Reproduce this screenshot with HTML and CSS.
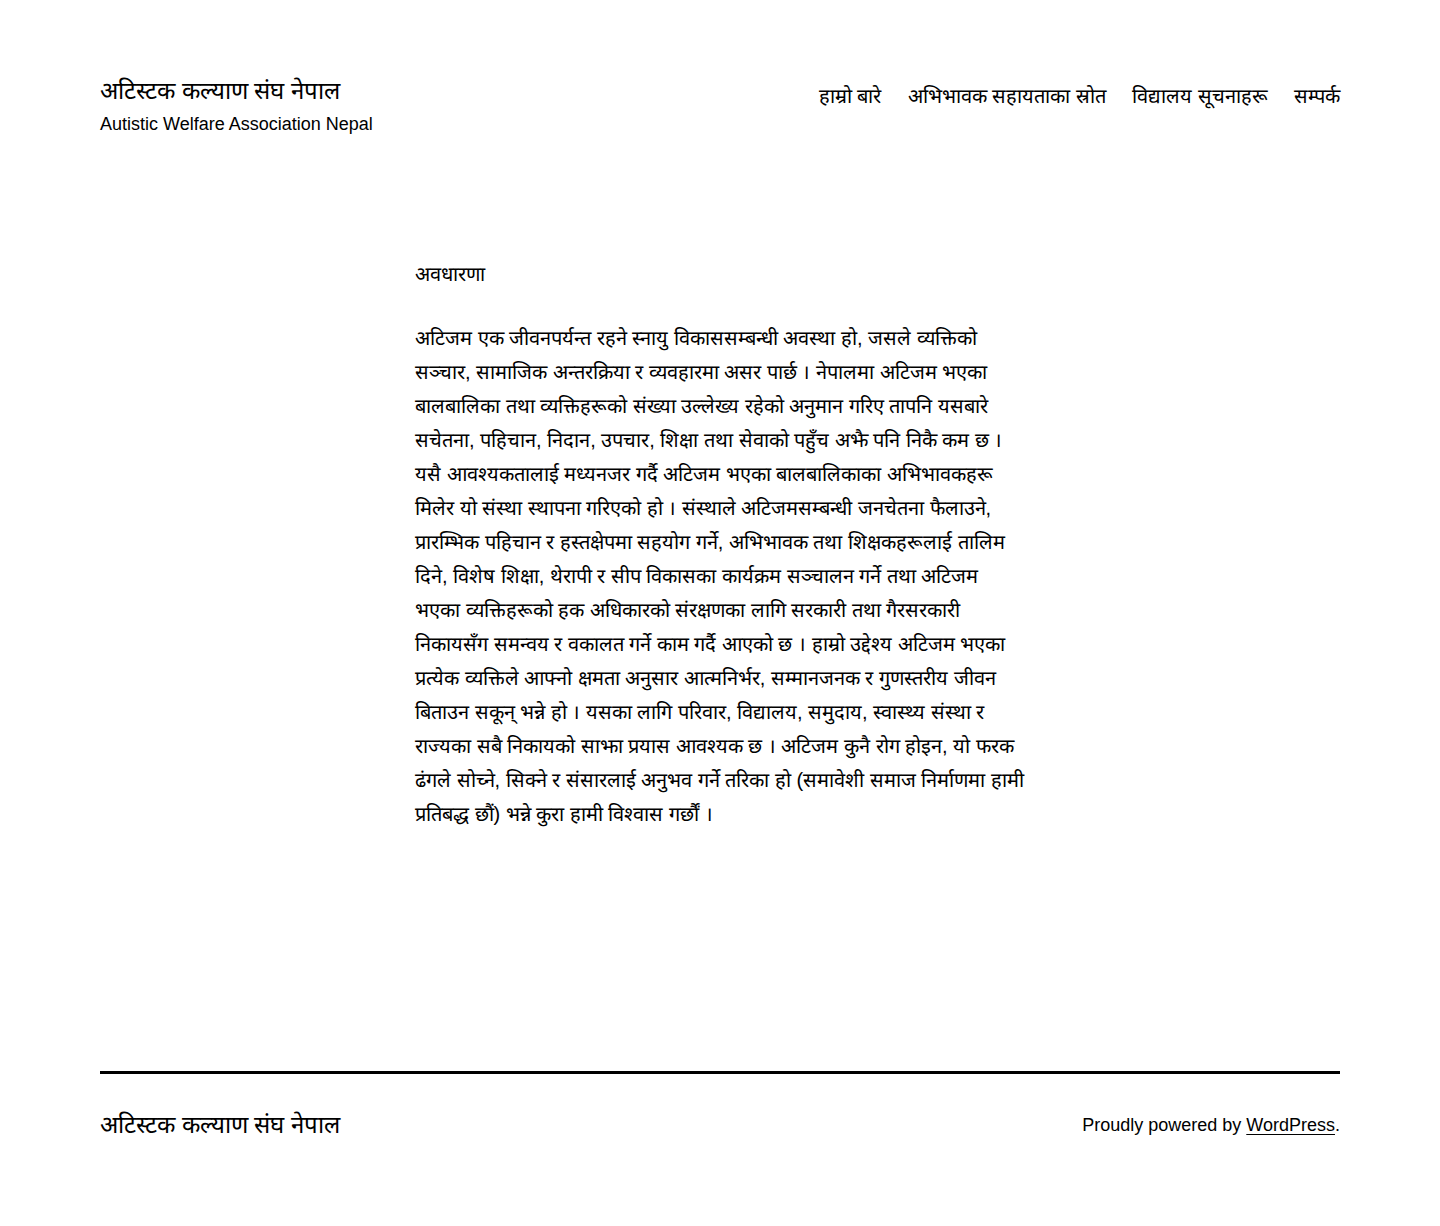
FILE: index.html
```html
<!DOCTYPE html>
<html lang="ne">
<head>
<meta charset="utf-8">
<title>अटिस्टक कल्याण संघ नेपाल</title>
<link rel="stylesheet" href="styles.css">
</head>
<body>
<header class="site-header">
  <div class="branding">
    <p class="site-title"><a href="#">अटिस्टक कल्याण संघ नेपाल</a></p>
    <p class="site-description">Autistic Welfare Association Nepal</p>
  </div>
  <nav class="primary-nav">
    <ul class="menu">
      <li><a href="#">हाम्रो बारे</a></li>
      <li><a href="#">अभिभावक सहायताका स्रोत</a></li>
      <li><a href="#">विद्यालय सूचनाहरू</a></li>
      <li><a href="#">सम्पर्क</a></li>
    </ul>
  </nav>
</header>
<main class="site-main">
  <div class="entry">
    <p class="lead">अवधारणा</p>
    <p class="body-text">अटिजम एक जीवनपर्यन्त रहने स्नायु विकाससम्बन्धी अवस्था हो, जसले व्यक्तिको सञ्चार, सामाजिक अन्तरक्रिया र व्यवहारमा असर पार्छ । नेपालमा अटिजम भएका बालबालिका तथा व्यक्तिहरूको संख्या उल्लेख्य रहेको अनुमान गरिए तापनि यसबारे सचेतना, पहिचान, निदान, उपचार, शिक्षा तथा सेवाको पहुँच अझै पनि निकै कम छ । यसै आवश्यकतालाई मध्यनजर गर्दै अटिजम भएका बालबालिकाका अभिभावकहरू मिलेर यो संस्था स्थापना गरिएको हो । संस्थाले अटिजमसम्बन्धी जनचेतना फैलाउने, प्रारम्भिक पहिचान र हस्तक्षेपमा सहयोग गर्ने, अभिभावक तथा शिक्षकहरूलाई तालिम दिने, विशेष शिक्षा, थेरापी र सीप विकासका कार्यक्रम सञ्चालन गर्ने तथा अटिजम भएका व्यक्तिहरूको हक अधिकारको संरक्षणका लागि सरकारी तथा गैरसरकारी निकायसँग समन्वय र वकालत गर्ने काम गर्दै आएको छ । हाम्रो उद्देश्य अटिजम भएका प्रत्येक व्यक्तिले आफ्नो क्षमता अनुसार आत्मनिर्भर, सम्मानजनक र गुणस्तरीय जीवन बिताउन सकून् भन्ने हो । यसका लागि परिवार, विद्यालय, समुदाय, स्वास्थ्य संस्था र राज्यका सबै निकायको साझा प्रयास आवश्यक छ । अटिजम कुनै रोग होइन, यो फरक ढंगले सोच्ने, सिक्ने र संसारलाई अनुभव गर्ने तरिका हो (समावेशी समाज निर्माणमा हामी प्रतिबद्ध छौं) भन्ने कुरा हामी विश्वास गर्छौं ।</p>
  </div>
</main>
<footer class="site-footer">
  <div class="site-info">
    <div class="site-name"><a href="#">अटिस्टक कल्याण संघ नेपाल</a></div>
    <div class="powered-by">Proudly powered by <a href="#">WordPress</a>.</div>
  </div>
</footer>
</body>
</html>
```
FILE: styles.css
```css
html, body {
  margin: 0;
  padding: 0;
  background: #ffffff;
}

body {
  font-family: "Liberation Sans", Arial, sans-serif;
  color: #000000;
  font-size: 20px;
  line-height: 1.7;
}

a {
  color: #000000;
}

.site-header {
  max-width: 1240px;
  margin: 0 auto;
  padding: 75px 0 60px;
  display: flex;
  justify-content: space-between;
  align-items: flex-start;
}

.site-title {
  margin: 0;
  font-size: 24px;
  line-height: 1.3;
}

.site-title a {
  text-decoration: none;
}

.site-description {
  margin: 5.5px 0 0;
  font-size: 18px;
  line-height: 1.4;
}

.primary-nav {
  margin-top: 8px;
}

.menu {
  list-style: none;
  margin: 0;
  padding: 0;
  display: flex;
  gap: 26.4px;
  font-size: 20px;
  line-height: 1.3;
}

.menu a {
  text-decoration: none;
}

.site-main {
  padding: 60px 0 240px;
}

.entry {
  max-width: 610px;
  margin: 0 auto;
}

.lead {
  margin: 0 0 30px;
}

.body-text {
  margin: 0;
}

.site-footer {
  max-width: 1240px;
  margin: 0 auto;
  border-top: 3px solid #000000;
  padding: 35px 0 85px;
}

.site-info {
  display: flex;
  justify-content: space-between;
  align-items: center;
}

.site-name {
  font-size: 24px;
  line-height: 1.3;
}

.site-name a {
  text-decoration: none;
}

.powered-by {
  font-size: 18px;
  line-height: 1.4;
  padding-top: 3px;
}

.powered-by a {
  text-decoration: underline;
  text-decoration-thickness: 1px;
  text-underline-offset: 3px;
}
```
